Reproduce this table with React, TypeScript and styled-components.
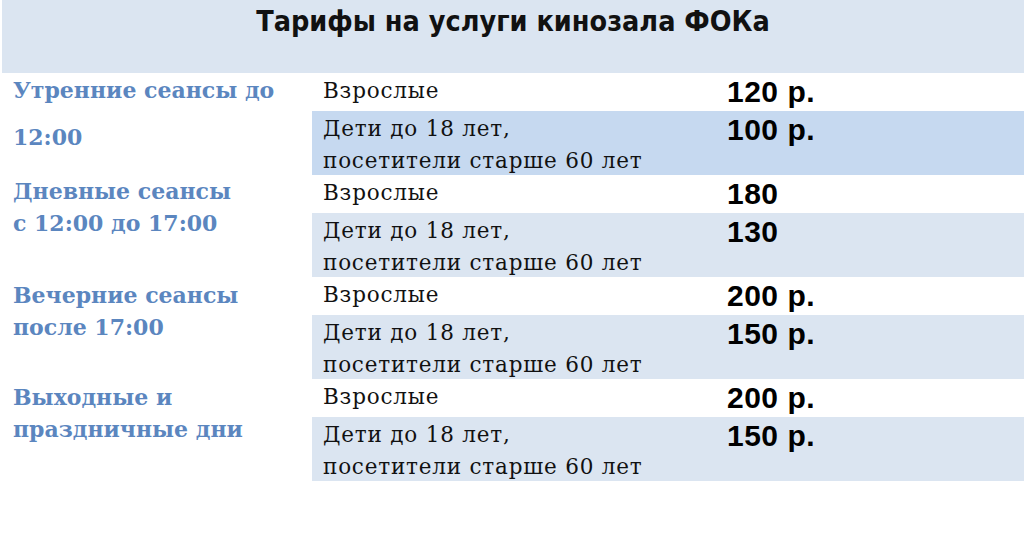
import { createGlobalStyle, styled } from "styled-components";

const GlobalStyle = createGlobalStyle`
  html, body {
    margin: 0;
    padding: 0;
    background: #ffffff;
  }
  body {
    width: 1024px;
    height: 546px;
    overflow: hidden;
  }
`;

const Page = styled.div`
  width: 1024px;
  height: 546px;
  background: #ffffff;
  display: flex;
  flex-direction: column;
`;

const TitleBar = styled.div`
  margin-left: 2px;
  height: 73px;
  background: #dbe5f1;
  display: flex;
  justify-content: center;
  align-items: flex-start;
`;

const Title = styled.h1`
  margin: 0;
  padding-top: 2px;
  font-family: "DejaVu Sans Condensed", "Liberation Sans Narrow", sans-serif;
  font-weight: bold;
  font-size: 28.5px;
  line-height: 40px;
  color: #111111;
`;

const Group = styled.div`
  display: grid;
  grid-template-columns: 312px 1fr;
`;

const Label = styled.div<{ $top: number; $gap: number }>`
  padding: ${(p) => p.$top}px 0 0 13px;
  display: flex;
  flex-direction: column;
  gap: ${(p) => p.$gap}px;
  font-family: "DejaVu Serif", "Liberation Serif", serif;
  font-weight: bold;
  font-size: 22px;
  line-height: 32px;
  color: #5b86bf;
`;

const Rows = styled.div`
  display: flex;
  flex-direction: column;
`;

const Row = styled.div<{ $tall?: boolean; $shade?: string }>`
  height: ${(p) => (p.$tall ? 64 : 38)}px;
  background: ${(p) => p.$shade ?? "#ffffff"};
  display: flex;
  align-items: flex-start;
  padding-top: 2px;
  box-sizing: border-box;
`;

const Who = styled.div`
  width: 415px;
  padding-left: 11px;
  box-sizing: border-box;
  font-family: "DejaVu Serif", "Liberation Serif", serif;
  font-size: 21.5px;
  letter-spacing: 0.8px;
  line-height: 32px;
  color: #111111;
`;

const Price = styled.div`
  margin-top: -2px;
  font-family: "Liberation Sans", Arial, sans-serif;
  font-weight: bold;
  font-size: 30px;
  letter-spacing: 0.5px;
  line-height: 38px;
  color: #000000;
`;

type Tariff = {
  label: string[];
  top: number;
  gap: number;
  adult: string;
  child: string;
  childShade: string;
};

const tariffs: Tariff[] = [
  {
    label: ["Утренние сеансы до", "12:00"],
    top: 1,
    gap: 15,
    adult: "120 р.",
    child: "100 р.",
    childShade: "#c6d9f0",
  },
  {
    label: ["Дневные сеансы", "с 12:00 до 17:00"],
    top: 0,
    gap: 0,
    adult: "180",
    child: "130",
    childShade: "#dbe5f1",
  },
  {
    label: ["Вечерние сеансы", "после 17:00"],
    top: 2,
    gap: 0,
    adult: "200 р.",
    child: "150 р.",
    childShade: "#dbe5f1",
  },
  {
    label: ["Выходные и", "праздничные дни"],
    top: 2,
    gap: 0,
    adult: "200 р.",
    child: "150 р.",
    childShade: "#dbe5f1",
  },
];

export default function App() {
  return (
    <Page>
      <GlobalStyle />
      <TitleBar>
        <Title>Тарифы на услуги кинозала ФОКа</Title>
      </TitleBar>
      {tariffs.map((t) => (
        <Group key={t.label[0]}>
          <Label $top={t.top} $gap={t.gap}>
            <span>{t.label[0]}</span>
            <span>{t.label[1]}</span>
          </Label>
          <Rows>
            <Row>
              <Who>Взрослые</Who>
              <Price>{t.adult}</Price>
            </Row>
            <Row $tall $shade={t.childShade}>
              <Who>
                Дети до 18 лет,
                <br />
                посетители старше 60 лет
              </Who>
              <Price>{t.child}</Price>
            </Row>
          </Rows>
        </Group>
      ))}
    </Page>
  );
}
